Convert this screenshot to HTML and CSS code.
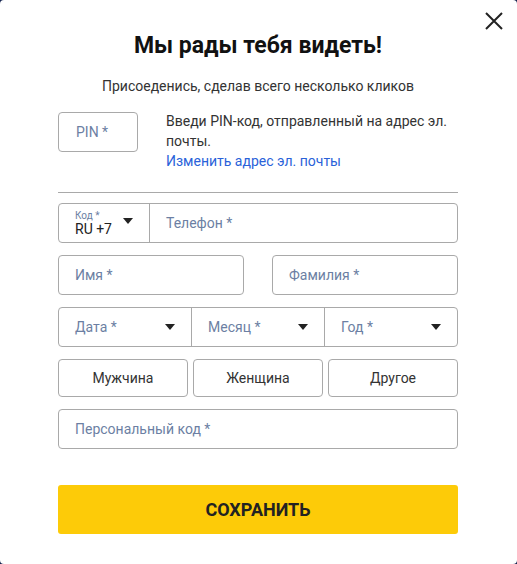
FILE: index.html
```html
<html lang="ru">
<head>
  <meta charset="UTF-8" />
  <meta name="viewport" content="width=device-width, initial-scale=1.0" />
  <title>Регистрация</title>
  <link rel="stylesheet" href="styles.css">
</head>
<body>
  <div class="modal">
    <button class="close" aria-label="Закрыть">
      <svg width="18" height="18" viewBox="0 0 18 18"><path d="M1 1L17 17M17 1L1 17" stroke="#222" stroke-width="2" fill="none"/></svg>
    </button>
    <h1>Мы рады тебя видеть!</h1>
    <p class="subtitle">Присоеденись, сделав всего несколько кликов</p>

    <div class="pin-row">
      <div class="field pin"><span class="placeholder">PIN *</span></div>
      <div class="pin-text">
        Введи PIN-код, отправленный на адрес эл. почты.<br>
        <a href="#">Изменить адрес эл. почты</a>
      </div>
    </div>

    <hr />

    <div class="field phone">
      <div class="code">
        <div>
          <span class="mini-label">Код *</span>
          <span class="value">RU +7</span>
        </div>
        <span class="arrow"></span>
      </div>
      <span class="placeholder">Телефон *</span>
    </div>

    <div class="name-row">
      <div class="field"><span class="placeholder">Имя *</span></div>
      <div class="field"><span class="placeholder">Фамилия *</span></div>
    </div>

    <div class="field date-row">
      <div class="seg"><span class="placeholder">Дата *</span><span class="arrow"></span></div>
      <div class="seg"><span class="placeholder">Месяц *</span><span class="arrow"></span></div>
      <div class="seg"><span class="placeholder">Год *</span><span class="arrow"></span></div>
    </div>

    <div class="gender-row">
      <button class="gender">Мужчина</button>
      <button class="gender">Женщина</button>
      <button class="gender">Другое</button>
    </div>

    <div class="field"><span class="placeholder">Персональный код *</span></div>

    <button class="save">СОХРАНИТЬ</button>
  </div>
</body>
</html>
```

FILE: styles.css
```css
body {
  margin: 0;
  background: #14234f;
  font-family: Roboto, 'Noto Sans', sans-serif;
  color: #333;
}
.modal {
  position: relative;
  box-sizing: border-box;
  width: 517px;
  height: 564px;
  background: white;
  border-radius: 4px;
  padding: 31px 59px 0 58px;
}
.close {
  position: absolute;
  top: 12px;
  right: 14px;
  width: 18px;
  height: 18px;
  padding: 0;
  border: none;
  background: none;
  cursor: pointer;
}
.close svg {
  display: block;
}
h1 {
  margin: 0;
  text-align: center;
  font-size: 23px;
  line-height: 30px;
  font-weight: 700;
  color: #111;
}
.subtitle {
  margin: 15px 0 0;
  text-align: center;
  font-size: 14px;
  line-height: 20px;
}
.field {
  box-sizing: border-box;
  display: flex;
  align-items: center;
  height: 40px;
  border: 1px solid #a9a9a9;
  border-radius: 4px;
  padding: 0 16px;
  margin-bottom: 12px;
}
.placeholder {
  font-size: 14px;
  color: #6c7fa3;
}
.pin-row {
  display: flex;
  gap: 28px;
  margin-top: 16px;
}
.field.pin {
  width: 80px;
  flex: none;
  margin: 0;
  padding-left: 17px;
}
.pin-text {
  font-size: 14px;
  line-height: 20px;
  margin-top: -1px;
}
.pin-text a {
  color: #2a62d9;
  text-decoration: none;
}
hr {
  border: none;
  border-top: 1px solid #a9a9a9;
  margin: 21px 0 10px;
}
.field.phone {
  padding: 0;
}
.code {
  display: flex;
  align-items: center;
  justify-content: space-between;
  width: 91px;
  height: 100%;
  box-sizing: border-box;
  padding: 0 16px 0 16px;
  border-right: 1px solid #a9a9a9;
  margin-right: 16px;
}
.mini-label {
  display: block;
  font-size: 10px;
  line-height: 11px;
  color: #6c7fa3;
}
.value {
  display: block;
  font-size: 14px;
  line-height: 16px;
  color: #222;
}
.arrow {
  width: 0;
  height: 0;
  border-left: 5px solid transparent;
  border-right: 5px solid transparent;
  border-top: 6px solid #222;
}
.code .arrow {
  margin-top: -4px;
}
.name-row {
  display: flex;
  gap: 28px;
}
.name-row .field {
  flex: 1;
}
.field.date-row {
  padding: 0;
}
.seg {
  flex: 1;
  display: flex;
  align-items: center;
  justify-content: space-between;
  height: 100%;
  padding: 0 16px;
  border-left: 1px solid #a9a9a9;
}
.seg:first-child {
  border-left: none;
}
.gender-row {
  display: flex;
  gap: 5px;
  margin-bottom: 12px;
}
.gender {
  flex: 1;
  height: 38px;
  border: 1px solid #a9a9a9;
  border-radius: 4px;
  background: white;
  font-family: inherit;
  font-size: 14px;
  color: #333;
  cursor: pointer;
}
.save {
  display: block;
  width: 100%;
  height: 49px;
  margin-top: 36px;
  border: none;
  border-radius: 3px;
  background: #fdcb08;
  font-family: inherit;
  font-size: 18px;
  font-weight: 700;
  color: #222;
  cursor: pointer;
}
```
